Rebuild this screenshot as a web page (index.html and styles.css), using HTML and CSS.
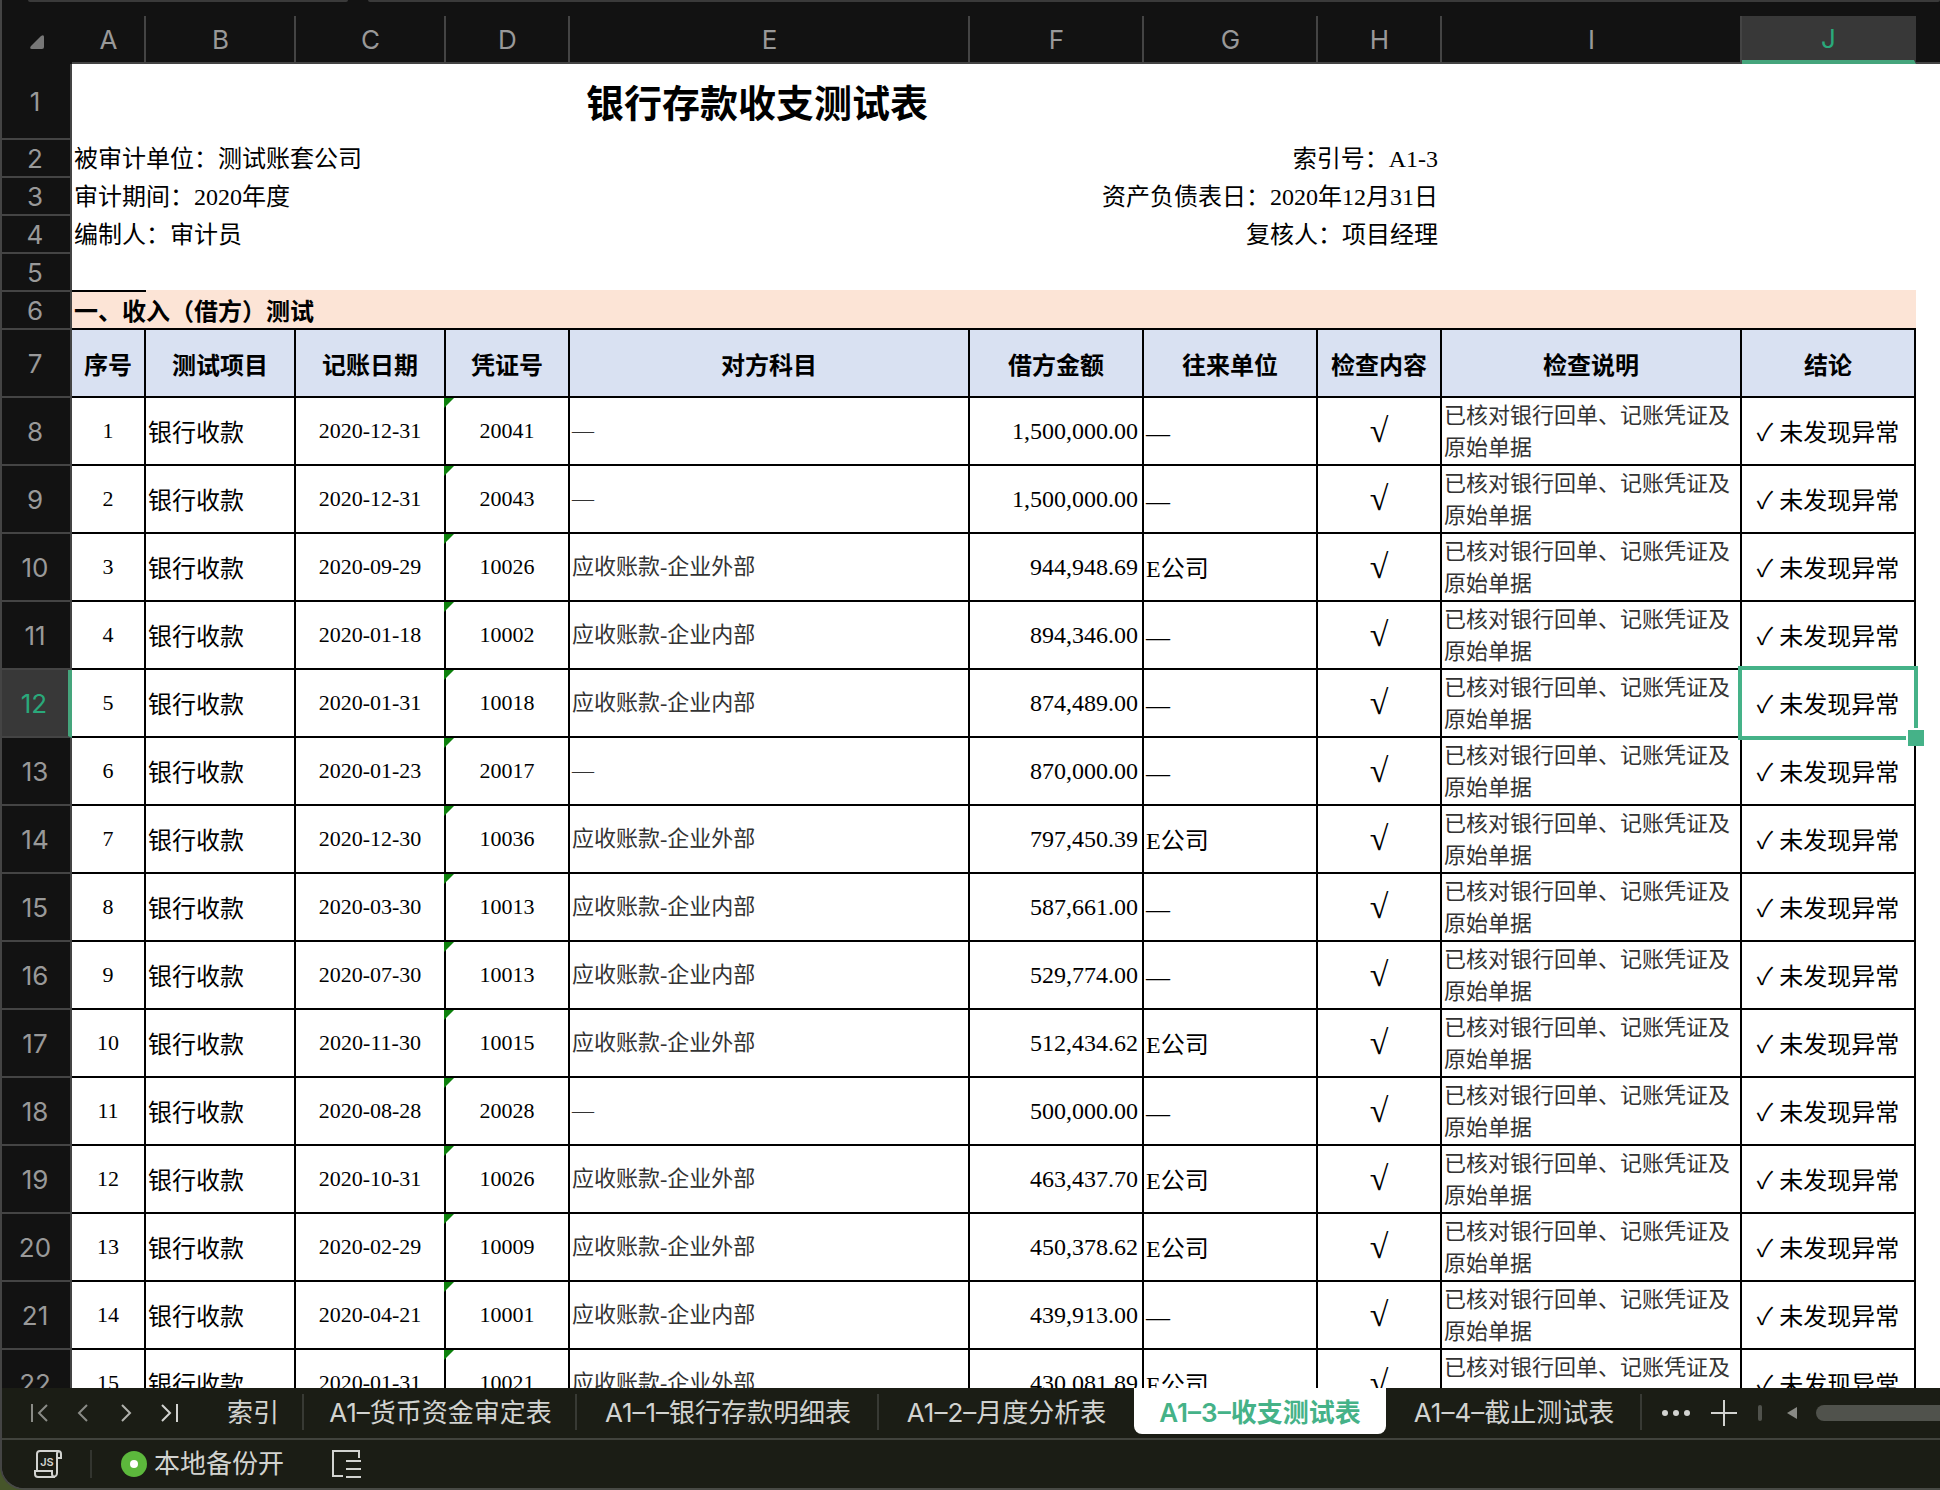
FILE: index.html
```html
<!DOCTYPE html>
<html lang="zh-CN">
<head>
<meta charset="utf-8">
<title>银行存款收支测试表</title>
<link rel="stylesheet" href="styles.css">
</head>
<body>
<div class="window">
  <div class="formula-edge"><span class="name-box"></span><span class="formula-box"></span></div>
  <main class="sheet">
    <table class="grid">
      <colgroup>
        <col class="w-head"><col class="w-a"><col class="w-date"><col class="w-date"><col class="w-small"><col class="w-subject"><col class="w-mid"><col class="w-mid"><col class="w-small"><col class="w-note"><col class="w-mid"><col>
      </colgroup>
      <thead>
        <tr class="letters">
          <td class="corner"><svg width="14" height="14" viewBox="0 0 14 14"><path d="M14 2v10a2 2 0 0 1-2 2H2q-3 0-1-3L11 1q3-2 3 1z" fill="#777"/></svg></td>
          <th>A</th><th>B</th><th>C</th><th>D</th><th>E</th><th>F</th><th>G</th><th>H</th><th>I</th><th class="current">J</th><td class="rest"></td>
        </tr>
      </thead>
      <tbody id="rows">
        <tr class="title-row"><th>1</th><td colspan="8" class="title">银行存款收支测试表</td><td colspan="3"></td></tr>
        <tr class="info"><th>2</th><td colspan="4">被审计单位：测试账套公司</td><td colspan="4" class="right">索引号：A1-3</td><td colspan="3"></td></tr>
        <tr class="info"><th>3</th><td colspan="4">审计期间：2020年度</td><td colspan="4" class="right">资产负债表日：2020年12月31日</td><td colspan="3"></td></tr>
        <tr class="info"><th>4</th><td colspan="4">编制人：审计员</td><td colspan="4" class="right">复核人：项目经理</td><td colspan="3"></td></tr>
        <tr class="info spacer"><th>5</th><td class="ink"></td><td colspan="9" class="peach"></td><td></td></tr>
        <tr class="section"><th>6</th><td colspan="10">一、收入（借方）测试</td><td class="rest"></td></tr>
        <tr class="fields"><th>7</th><td>序号</td><td>测试项目</td><td>记账日期</td><td>凭证号</td><td>对方科目</td><td>借方金额</td><td>往来单位</td><td>检查内容</td><td>检查说明</td><td>结论</td><td class="rest"></td></tr>
      </tbody>
    </table>
  </main>
  <nav class="tabs">
    <div class="pager">
      <button aria-label="第一张"><svg width="20" height="20" viewBox="0 0 20 20" class="dim"><path d="M2 1v18M17 2L9 10l8 8"/></svg></button>
      <button aria-label="上一张"><svg width="20" height="20" viewBox="0 0 20 20" class="dim"><path d="M14 2L6 10l8 8"/></svg></button>
      <button aria-label="下一张"><svg width="20" height="20" viewBox="0 0 20 20" class="half"><path d="M6 2l8 8-8 8"/></svg></button>
      <button aria-label="最后一张"><svg width="20" height="20" viewBox="0 0 20 20"><path d="M3 2l8 8-8 8M18 1v18"/></svg></button>
    </div>
    <div class="tab-list">
      <button class="tab">索引</button>
      <button class="tab">A1–货币资金审定表</button>
      <button class="tab">A1–1–银行存款明细表</button>
      <button class="tab plain">A1–2–月度分析表</button>
      <button class="tab active">A1–3–收支测试表</button>
      <button class="tab">A1–4–截止测试表</button>
    </div>
    <button class="more" aria-label="更多工作表"><svg width="28" height="28" viewBox="0 0 28 28"><g class="dots"><circle cx="3" cy="14" r="3"/><circle cx="14" cy="14" r="3"/><circle cx="25" cy="14" r="3"/></g></svg></button>
    <button class="more" aria-label="新建工作表"><svg width="28" height="28" viewBox="0 0 28 28"><path d="M1 14h26M14 1v26"/></svg></button>
    <div class="scroll">
      <span class="grip"></span>
      <svg width="10" height="12" viewBox="0 0 10 12"><path d="M10 0v12L0 6z" class="arrow"/></svg>
      <span class="thumb"></span>
    </div>
  </nav>
  <footer class="status">
    <button class="macro" aria-label="JS 宏"><svg width="28" height="28" viewBox="0 0 28 28"><path d="M3 21V4a3 3 0 0 1 3-3h18a3 3 0 0 1 3 3v4h-4M23 8V4a3 3 0 0 1 2-3M23 8v15a4 4 0 0 1-4 4H4a3 3 0 0 1-3-3v-3h17v3q0 3 3 3"/><text x="13" y="16" text-anchor="middle">JS</text></svg></button>
    <button class="backup"><svg width="26" height="26" viewBox="0 0 26 26"><circle cx="13" cy="13" r="13" class="halo"/><circle cx="13" cy="13" r="4" class="core"/></svg>本地备份开</button>
    <button class="outline" aria-label="目录"><svg width="30" height="28" viewBox="0 0 30 28"><path d="M27 8V1H1v25h10M14 11h15M14 19h15M14 27h15"/></svg></button>
  </footer>
</div>
<script src="sheet.js"></script>
</body>
</html>
```
FILE: sheet.js
```js
const outer = "应收账款-企业外部", inner = "应收账款-企业内部", none = "—", firm = "E公司";
const entries = [
  ["2020-12-31", "20041", none, "1,500,000.00", none],
  ["2020-12-31", "20043", none, "1,500,000.00", none],
  ["2020-09-29", "10026", outer, "944,948.69", firm],
  ["2020-01-18", "10002", inner, "894,346.00", none],
  ["2020-01-31", "10018", inner, "874,489.00", none],
  ["2020-01-23", "20017", none, "870,000.00", none],
  ["2020-12-30", "10036", outer, "797,450.39", firm],
  ["2020-03-30", "10013", inner, "587,661.00", none],
  ["2020-07-30", "10013", inner, "529,774.00", none],
  ["2020-11-30", "10015", outer, "512,434.62", firm],
  ["2020-08-28", "20028", none, "500,000.00", none],
  ["2020-10-31", "10026", outer, "463,437.70", firm],
  ["2020-02-29", "10009", outer, "450,378.62", firm],
  ["2020-04-21", "10001", inner, "439,913.00", none],
  ["2020-01-31", "10021", outer, "430,081.89", firm]
];

const body = document.getElementById("rows");
entries.forEach(([date, voucher, subject, amount, party], i) => {
  const row = document.createElement("tr");
  const current = i === 4;
  row.className = "entry";
  row.innerHTML = `<th${current ? ' class="current"' : ""}>${i + 8}</th>
    <td class="num">${i + 1}</td><td class="label">银行收款</td><td class="num">${date}</td>
    <td class="num flagged">${voucher}</td><td class="soft">${subject}</td>
    <td class="right">${amount}</td><td class="label">${party}</td><td class="check">√</td>
    <td class="soft note">已核对银行回单、记账凭证及原始单据</td>
    <td class="verdict label${current ? " selected" : ""}">✓ 未发现异常</td><td class="rest"></td>`;
  body.append(row);
});
```
FILE: styles.css
```css
* { box-sizing: border-box; }

body {
  margin: 0;
  background: #46552a;
  font-family: "Liberation Serif", "Noto Sans CJK SC", serif;
  color: #000;
}

button {
  margin: 0;
  padding: 0;
  border: 0;
  background: none;
  color: inherit;
  font: inherit;
}

svg { display: block; flex: none; }

.window {
  display: flex;
  flex-direction: column;
  height: 100vh;
  overflow: hidden;
  background: #121212;
  border-left: 2px solid #444;
  border-bottom: 2px solid #484a45;
  border-bottom-left-radius: 24px;
}

.formula-edge {
  display: flex;
  gap: 20px;
  flex: none;
  height: 16px;
  padding-left: 26px;
}

.name-box, .formula-box {
  height: 2px;
  background: #3a3a3a;
  border-radius: 0 0 2px 2px;
}

.name-box { width: 320px; }
.formula-box { flex: 1; }

.sheet {
  flex: 1;
  min-height: 0;
  overflow: hidden;
  background: #fff;
}

.grid {
  width: 100%;
  table-layout: fixed;
  border-collapse: separate;
  border-spacing: 0;
  font-size: 24px;
  line-height: 32px;
}

.w-head { width: 70px; }
.w-a { width: 74px; }
.w-date { width: 150px; }
.w-small { width: 124px; }
.w-subject { width: 400px; }
.w-mid { width: 174px; }
.w-note { width: 300px; }

.grid td { padding: 0 2px; }

.grid th {
  padding: 2px 2px 0 0;
  border-right: 2px solid #444;
  border-bottom: 2px solid #444;
  background: #121212;
  color: #999;
  font: 400 26px/32px Inter, sans-serif;
  text-align: center;
}

.grid .letters td, .grid .letters th {
  height: 48px;
  padding: 2px 0 0 1px;
  background: #121212;
}

.letters .rest { border-bottom: 2px solid #444; }
.letters .corner svg { margin: 2px 0 0 27px; }

.grid .letters .current {
  border-color: #383838;
  border-bottom: 4px solid #45a57c;
  background: #383838;
  color: #2aa97b;
}

.entry .current {
  border-right: 4px solid #45a57c;
  background: #383838;
  color: #2aa97b;
}

.title-row > * { height: 76px; }

.grid .title {
  padding-top: 4px;
  font-size: 38px;
  font-weight: 700;
  text-align: center;
}

.info > *, .section > * { height: 38px; }

.grid .right {
  padding-right: 4px;
  text-align: right;
}

.spacer .ink { border-bottom: 2px solid #000; }
.spacer .peach { border-bottom: 2px solid #fce4d6; }

.grid .section td {
  padding-top: 4px;
  background: #fce4d6;
  border-bottom: 2px solid #000;
  font-weight: 700;
}

.fields > *, .entry > * { height: 68px; }

.fields td, .entry td {
  border-right: 2px solid #000;
  border-bottom: 2px solid #000;
}

.grid .fields td {
  padding-top: 6px;
  background: #d9e1f2;
  font-weight: 700;
  text-align: center;
}

.grid tbody .rest {
  border: 0;
  background: #fff;
}

.grid .label { padding-top: 4px; }
.entry .num, .entry .soft { font-size: 22px; }
.entry .num, .entry .check, .entry .verdict { text-align: center; }
.entry .soft { color: #333; }
.grid .note { padding-top: 2px; }
.check { font-size: 34px; }
.flagged, .selected { position: relative; }

.flagged::before {
  content: "";
  position: absolute;
  top: 0;
  left: -2px;
  width: 10px;
  height: 10px;
  background: #0b800b;
  clip-path: polygon(0 0, 100% 0, 0 100%);
}

.selected::before {
  content: "";
  position: absolute;
  inset: -4px;
  border: 4px solid #45b288;
}

.selected::after {
  content: "";
  position: absolute;
  right: -10px;
  bottom: -10px;
  width: 16px;
  height: 16px;
  border: 2px solid #fff;
  border-right: 0;
  border-bottom: 0;
  background: #45b288;
}

.tabs, .status {
  display: flex;
  align-items: center;
  flex: none;
  background: #1b1d15;
  color: #d2d3d0;
  font: 400 26px/32px Inter, "Noto Sans CJK SC", sans-serif;
}

.tabs {
  height: 52px;
  padding-bottom: 2px;
  box-shadow: inset 0 -2px #41433d;
}

.tabs path, .status path {
  fill: none;
  stroke: #d2d3d0;
  stroke-width: 2;
}

.tabs .pager .dim path { stroke: #8a8b86; }
.tabs .pager .half path { stroke: #b0b1ac; }
.dots { fill: #d2d3d0; }
.tabs .arrow { fill: #898a85; stroke: none; }

.pager {
  display: flex;
  gap: 23px;
  flex: none;
  width: 200px;
  padding-left: 28px;
}

.tab-list {
  display: grid;
  grid-template-columns: 102px 273px 302px 255px 252px 256px;
  align-self: stretch;
  flex: none;
}

.tab {
  position: relative;
  height: 46px;
  padding-top: 4px;
  white-space: nowrap;
}

.tab::after {
  content: "";
  position: absolute;
  right: 0;
  top: 6px;
  width: 2px;
  height: 36px;
  background: #383a34;
}

.plain::after, .active::after { display: none; }

.active {
  border-radius: 0 0 8px 8px;
  background: #fff;
  color: #45b288;
  font-weight: 600;
}

.more { margin-left: 20px; }

.scroll {
  display: flex;
  align-items: center;
  flex: 1;
  margin-left: 20px;
}

.grip {
  width: 4px;
  height: 16px;
  margin-right: 25px;
  border-radius: 2px;
  background: #50524c;
}

.thumb {
  flex: 1;
  height: 16px;
  margin-left: 19px;
  border-radius: 8px 0 0 8px;
  background: #50524c;
}

.status {
  height: 48px;
  padding-left: 32px;
}

.status text {
  fill: #d2d3d0;
  font: 600 11px Inter, sans-serif;
}

.macro {
  padding-right: 28px;
  border-right: 2px solid #33352f;
}

.backup {
  display: flex;
  align-items: center;
  gap: 7px;
  margin-left: 29px;
}

.halo { fill: #5cb83c; }
.core { fill: #fff; }
.outline { margin-left: 48px; }
```
